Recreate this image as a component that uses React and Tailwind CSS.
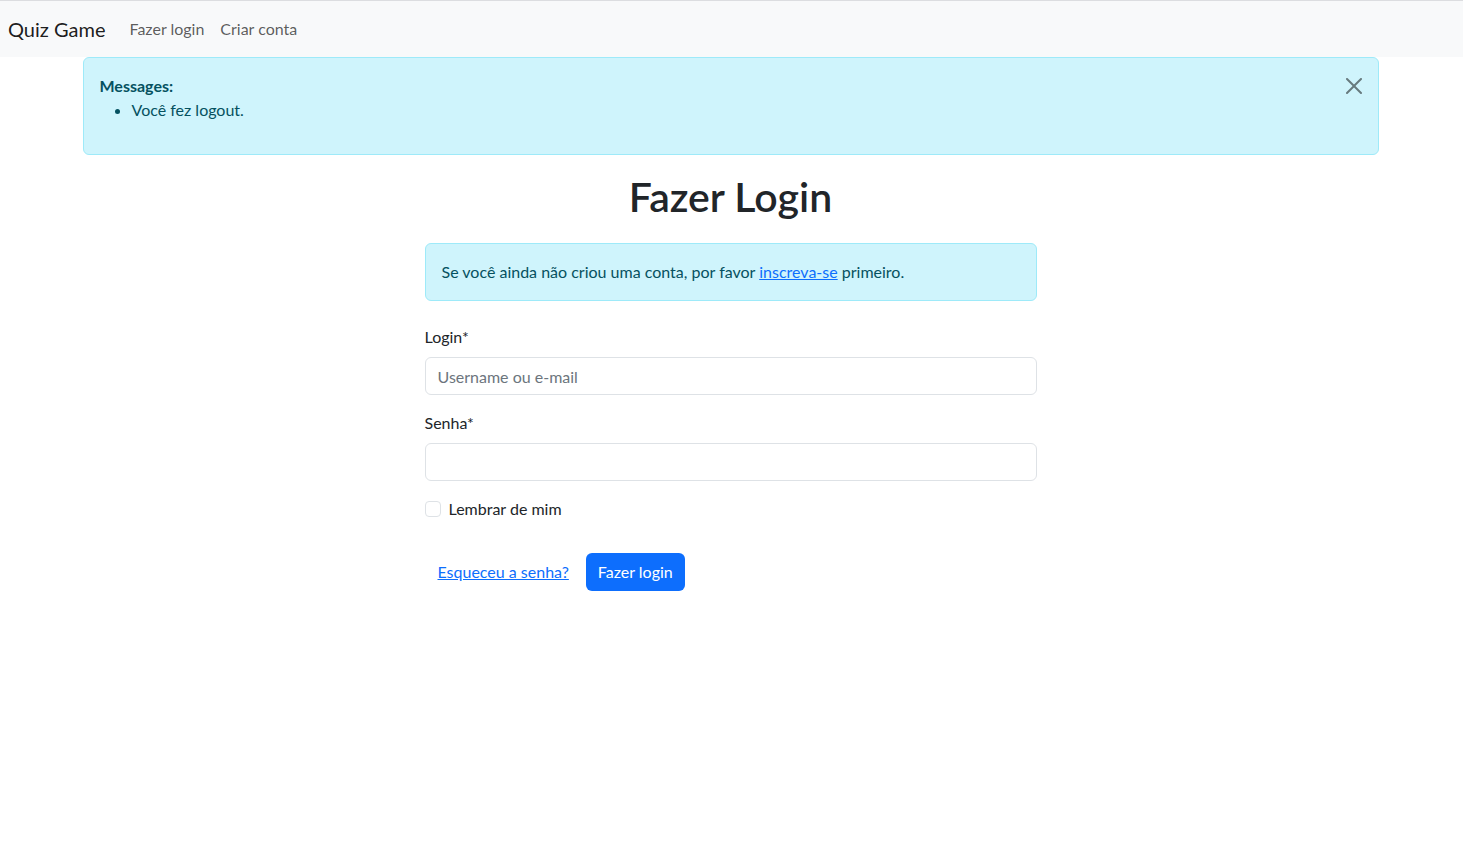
import { useState } from 'react';

const FONT = '[font-family:Lato,"Open_Sans",sans-serif]';

const CloseIcon = () => (
  <svg viewBox="0 0 16 16" className="w-4 h-4" fill="currentColor">
    <path d="M.293.293a1 1 0 0 1 1.414 0L8 6.586 14.293.293a1 1 0 1 1 1.414 1.414L9.414 8l6.293 6.293a1 1 0 0 1-1.414 1.414L8 9.414l-6.293 6.293a1 1 0 0 1-1.414-1.414L6.586 8 .293 1.707a1 1 0 0 1 0-1.414z" />
  </svg>
);

export default function App() {
  const [showMsg, setShowMsg] = useState(true);
  const [remember, setRemember] = useState(false);

  return (
    <div className={`min-h-screen bg-white text-[#212529] text-base leading-6 ${FONT}`}>
      {/* Navbar */}
      <nav className="border-t border-[#dcdde0] bg-[#f8f9fa] h-[57px] flex items-center px-2">
        <a href="#" className="text-xl leading-[30px] py-[5px] text-black/90 mr-4">Quiz Game</a>
        <a href="#" className="px-2 py-2 text-black/65">Fazer login</a>
        <a href="#" className="px-2 py-2 text-black/65">Criar conta</a>
      </nav>

      <div className="max-w-[1320px] mx-auto px-3 -translate-x-px">
        {/* Messages */}
        {showMsg && (
          <div className="relative mb-4 border border-[#9eeaf9] bg-[#cff4fc] text-[#055160] rounded-md p-4 pr-12">
            <strong className="font-bold block">Messages:</strong>
            <ul className="list-disc pl-8 mb-4">
              <li>Você fez logout.</li>
            </ul>
            <button
              onClick={() => setShowMsg(false)}
              className="absolute top-0 right-0 px-4 py-5 text-black/50 hover:text-black/75">
              <CloseIcon />
            </button>
          </div>
        )}

        <h1 className="text-center text-[41px] leading-[48px] font-semibold pt-[2px] mb-[22px]">Fazer Login</h1>

        <div className="w-[612px] mx-auto">
          <div className="border border-[#9eeaf9] bg-[#cff4fc] text-[#055160] rounded-md p-4 mb-6">
            Se você ainda não criou uma conta, por favor{' '}
            <a href="#" className="text-[#0d6efd] underline">inscreva-se</a> primeiro.
          </div>

          <form onSubmit={e => e.preventDefault()}>
            <div className="mb-4">
              <label className="block mb-2">Login*</label>
              <input
                type="text"
                placeholder="Username ou e-mail"
                className="block w-full h-[38px] px-3 border border-[#dee2e6] rounded-md outline-none placeholder:text-[#6c757d] focus:border-[#86b7fe]"
              />
            </div>
            <div className="mb-4">
              <label className="block mb-2">Senha*</label>
              <input
                type="password"
                className="block w-full h-[38px] px-3 border border-[#dee2e6] rounded-md outline-none focus:border-[#86b7fe]"
              />
            </div>
            <label className="flex items-center gap-2 h-6 cursor-pointer">
              <input
                type="checkbox"
                checked={remember}
                onChange={e => setRemember(e.target.checked)}
                className="appearance-none w-4 h-4 border border-[#dee2e6] rounded checked:bg-[#0d6efd] checked:border-[#0d6efd]"
              />
              <span>Lembrar de mim</span>
            </label>

            <div className="mt-8 flex items-center gap-1">
              <a href="#" className="px-[13px] py-[7px] text-[#0d6efd] underline">Esqueceu a senha?</a>
              <button type="submit" className="h-[38px] px-3 rounded-md bg-[#0d6efd] text-white">Fazer login</button>
            </div>
          </form>
        </div>
      </div>
    </div>
  );
}
